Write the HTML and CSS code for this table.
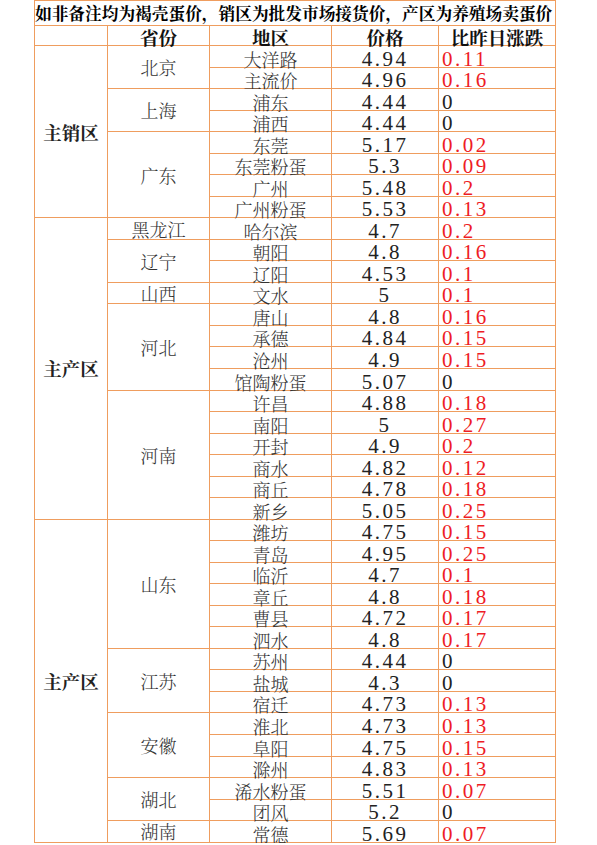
FILE: index.html
```html
<!DOCTYPE html>
<html lang="zh-CN">
<head>
<meta charset="utf-8">
<title>蛋价</title>
<link rel="stylesheet" href="styles.css">
</head>
<body>
<table class="sheet">
<colgroup>
<col class="c1"><col class="c2"><col class="c3"><col class="c4"><col class="c5">
</colgroup>
<tbody>
<tr class="title"><td colspan="5">如非备注均为褐壳蛋价，销区为批发市场接货价，产区为养殖场卖蛋价</td></tr>
<tr class="head"><td></td><td>省份</td><td>地区</td><td>价格</td><td>比昨日涨跌</td></tr>

<tr><td class="zone" rowspan="8">主销区</td><td class="prov" rowspan="2">北京</td><td class="city">大洋路</td><td class="price">4.94</td><td class="chg up">0.11</td></tr>
<tr><td class="city">主流价</td><td class="price">4.96</td><td class="chg up">0.16</td></tr>
<tr><td class="prov" rowspan="2">上海</td><td class="city">浦东</td><td class="price">4.44</td><td class="chg">0</td></tr>
<tr><td class="city">浦西</td><td class="price">4.44</td><td class="chg">0</td></tr>
<tr><td class="prov" rowspan="4">广东</td><td class="city">东莞</td><td class="price">5.17</td><td class="chg up">0.02</td></tr>
<tr><td class="city">东莞粉蛋</td><td class="price">5.3</td><td class="chg up">0.09</td></tr>
<tr><td class="city">广州</td><td class="price">5.48</td><td class="chg up">0.2</td></tr>
<tr><td class="city">广州粉蛋</td><td class="price">5.53</td><td class="chg up">0.13</td></tr>

<tr><td class="zone" rowspan="14">主产区</td><td class="prov">黑龙江</td><td class="city">哈尔滨</td><td class="price">4.7</td><td class="chg up">0.2</td></tr>
<tr><td class="prov" rowspan="2">辽宁</td><td class="city">朝阳</td><td class="price">4.8</td><td class="chg up">0.16</td></tr>
<tr><td class="city">辽阳</td><td class="price">4.53</td><td class="chg up">0.1</td></tr>
<tr><td class="prov">山西</td><td class="city">文水</td><td class="price">5</td><td class="chg up">0.1</td></tr>
<tr><td class="prov" rowspan="4">河北</td><td class="city">唐山</td><td class="price">4.8</td><td class="chg up">0.16</td></tr>
<tr><td class="city">承德</td><td class="price">4.84</td><td class="chg up">0.15</td></tr>
<tr><td class="city">沧州</td><td class="price">4.9</td><td class="chg up">0.15</td></tr>
<tr><td class="city">馆陶粉蛋</td><td class="price">5.07</td><td class="chg">0</td></tr>
<tr><td class="prov" rowspan="6">河南</td><td class="city">许昌</td><td class="price">4.88</td><td class="chg up">0.18</td></tr>
<tr><td class="city">南阳</td><td class="price">5</td><td class="chg up">0.27</td></tr>
<tr><td class="city">开封</td><td class="price">4.9</td><td class="chg up">0.2</td></tr>
<tr><td class="city">商水</td><td class="price">4.82</td><td class="chg up">0.12</td></tr>
<tr><td class="city">商丘</td><td class="price">4.78</td><td class="chg up">0.18</td></tr>
<tr><td class="city">新乡</td><td class="price">5.05</td><td class="chg up">0.25</td></tr>

<tr><td class="zone" rowspan="15">主产区</td><td class="prov" rowspan="6">山东</td><td class="city">潍坊</td><td class="price">4.75</td><td class="chg up">0.15</td></tr>
<tr><td class="city">青岛</td><td class="price">4.95</td><td class="chg up">0.25</td></tr>
<tr><td class="city">临沂</td><td class="price">4.7</td><td class="chg up">0.1</td></tr>
<tr><td class="city">章丘</td><td class="price">4.8</td><td class="chg up">0.18</td></tr>
<tr><td class="city">曹县</td><td class="price">4.72</td><td class="chg up">0.17</td></tr>
<tr><td class="city">泗水</td><td class="price">4.8</td><td class="chg up">0.17</td></tr>
<tr><td class="prov" rowspan="3">江苏</td><td class="city">苏州</td><td class="price">4.44</td><td class="chg">0</td></tr>
<tr><td class="city">盐城</td><td class="price">4.3</td><td class="chg">0</td></tr>
<tr><td class="city">宿迁</td><td class="price">4.73</td><td class="chg up">0.13</td></tr>
<tr><td class="prov" rowspan="3">安徽</td><td class="city">淮北</td><td class="price">4.73</td><td class="chg up">0.13</td></tr>
<tr><td class="city">阜阳</td><td class="price">4.75</td><td class="chg up">0.15</td></tr>
<tr><td class="city">滁州</td><td class="price">4.83</td><td class="chg up">0.13</td></tr>
<tr><td class="prov" rowspan="2">湖北</td><td class="city">浠水粉蛋</td><td class="price">5.51</td><td class="chg up">0.07</td></tr>
<tr><td class="city">团风</td><td class="price">5.2</td><td class="chg">0</td></tr>
<tr><td class="prov">湖南</td><td class="city">常德</td><td class="price">5.69</td><td class="chg up">0.07</td></tr>
</tbody>
</table>
</body>
</html>
```
FILE: styles.css
```css
html, body {
  margin: 0;
  padding: 0;
  background: #ffffff;
}

body {
  padding-left: 34px;
  font-family: "Noto Serif CJK SC", "Noto Sans CJK SC", serif;
  color: #333333;
}

.sheet {
  border-collapse: collapse;
  table-layout: fixed;
  width: 521px;
}

.c1 { width: 73px; }
.c2 { width: 102px; }
.c3 { width: 122px; }
.c4 { width: 107px; }
.c5 { width: 117px; }

.sheet td {
  border: 1px solid #ef9d5e;
  padding: 0;
  height: 20.54px;
  line-height: 15px;
  font-size: 18px;
  text-align: center;
  vertical-align: bottom;
  white-space: nowrap;
}

.sheet tr.title td {
  height: 24px;
  font-size: 16.7px;
  font-weight: 700;
  color: #000000;
  text-align: left;
  vertical-align: middle;
  line-height: 20px;
}

.sheet tr.head td {
  height: 19px;
  font-size: 18.5px;
  font-weight: 700;
  color: #111111;
  line-height: 16px;
}

.sheet td.zone {
  font-weight: 700;
  font-size: 18.5px;
  color: #222222;
  vertical-align: middle;
  line-height: 18px;
}

.sheet td.prov {
  vertical-align: middle;
  font-weight: 300;
  color: #333333;
  line-height: 18px;
}

.sheet td.city {
  font-weight: 300;
  color: #333333;
}

.sheet td.price,
.sheet td.chg {
  font-family: "Liberation Serif", serif;
  font-size: 21px;
  letter-spacing: 2.5px;
  color: #222222;
}

.sheet td.chg {
  text-align: left;
  padding-left: 3px;
}

.sheet td.chg.up {
  color: #ee1c25;
}
```
